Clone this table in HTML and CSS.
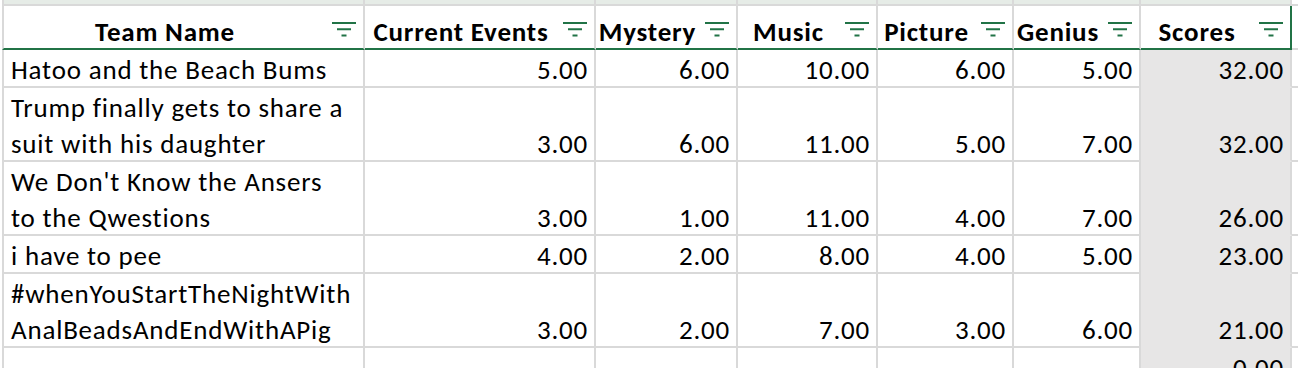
FILE: index.html
```html
<!DOCTYPE html>
<html>
<head>
<meta charset="utf-8">
<link rel="stylesheet" href="styles.css">
</head>
<body>
<div class="sheet">
  <div class="row strip">
    <div class="cell first"></div><div class="cell"></div><div class="cell"></div><div class="cell"></div><div class="cell"></div><div class="cell"></div><div class="cell"></div><div class="cell pad"></div>
  </div>
  <div class="row head">
    <div class="cell hcell first"><span class="ht">Team Name</span><span class="fb"><svg width="24" height="16" viewBox="0 0 24 16"><path d="M0 1H24M5 7.2H19M9.5 13.4H14.5" stroke="#217346" stroke-width="2" fill="none"/></svg></span></div>
    <div class="cell hcell"><span class="ht">Current Events</span><span class="fb"><svg width="24" height="16" viewBox="0 0 24 16"><path d="M0 1H24M5 7.2H19M9.5 13.4H14.5" stroke="#217346" stroke-width="2" fill="none"/></svg></span></div>
    <div class="cell hcell"><span class="ht">Mystery</span><span class="fb"><svg width="24" height="16" viewBox="0 0 24 16"><path d="M0 1H24M5 7.2H19M9.5 13.4H14.5" stroke="#217346" stroke-width="2" fill="none"/></svg></span></div>
    <div class="cell hcell"><span class="ht">Music</span><span class="fb"><svg width="24" height="16" viewBox="0 0 24 16"><path d="M0 1H24M5 7.2H19M9.5 13.4H14.5" stroke="#217346" stroke-width="2" fill="none"/></svg></span></div>
    <div class="cell hcell"><span class="ht">Picture</span><span class="fb"><svg width="24" height="16" viewBox="0 0 24 16"><path d="M0 1H24M5 7.2H19M9.5 13.4H14.5" stroke="#217346" stroke-width="2" fill="none"/></svg></span></div>
    <div class="cell hcell"><span class="ht">Genius</span><span class="fb"><svg width="24" height="16" viewBox="0 0 24 16"><path d="M0 1H24M5 7.2H19M9.5 13.4H14.5" stroke="#217346" stroke-width="2" fill="none"/></svg></span></div>
    <div class="cell hcell last"><span class="ht">Scores</span><span class="fb"><svg width="24" height="16" viewBox="0 0 24 16"><path d="M0 1H24M5 7.2H19M9.5 13.4H14.5" stroke="#217346" stroke-width="2" fill="none"/></svg></span></div>
    <div class="cell pad"></div>
  </div>
  <div class="row">
    <div class="cell first name"><span class="t">Hatoo and the Beach Bums</span></div>
    <div class="cell num"><span class="t">5.00</span></div><div class="cell num"><span class="t">6.00</span></div><div class="cell num"><span class="t">10.00</span></div><div class="cell num"><span class="t">6.00</span></div><div class="cell num"><span class="t">5.00</span></div><div class="cell num score"><span class="t">32.00</span></div><div class="cell pad"></div>
  </div>
  <div class="row">
    <div class="cell first name"><span class="t">Trump finally gets to share a<br>suit with his daughter</span></div>
    <div class="cell num"><span class="t">3.00</span></div><div class="cell num"><span class="t">6.00</span></div><div class="cell num"><span class="t">11.00</span></div><div class="cell num"><span class="t">5.00</span></div><div class="cell num"><span class="t">7.00</span></div><div class="cell num score"><span class="t">32.00</span></div><div class="cell pad"></div>
  </div>
  <div class="row">
    <div class="cell first name"><span class="t">We Don't Know the Ansers<br>to the Qwestions</span></div>
    <div class="cell num"><span class="t">3.00</span></div><div class="cell num"><span class="t">1.00</span></div><div class="cell num"><span class="t">11.00</span></div><div class="cell num"><span class="t">4.00</span></div><div class="cell num"><span class="t">7.00</span></div><div class="cell num score"><span class="t">26.00</span></div><div class="cell pad"></div>
  </div>
  <div class="row">
    <div class="cell first name"><span class="t">i have to pee</span></div>
    <div class="cell num"><span class="t">4.00</span></div><div class="cell num"><span class="t">2.00</span></div><div class="cell num"><span class="t">8.00</span></div><div class="cell num"><span class="t">4.00</span></div><div class="cell num"><span class="t">5.00</span></div><div class="cell num score"><span class="t">23.00</span></div><div class="cell pad"></div>
  </div>
  <div class="row">
    <div class="cell first name"><span class="t">#whenYouStartTheNightWith<br>AnalBeadsAndEndWithAPig</span></div>
    <div class="cell num"><span class="t">3.00</span></div><div class="cell num"><span class="t">2.00</span></div><div class="cell num"><span class="t">7.00</span></div><div class="cell num"><span class="t">3.00</span></div><div class="cell num"><span class="t">6.00</span></div><div class="cell num score"><span class="t">21.00</span></div><div class="cell pad"></div>
  </div>
  <div class="row">
    <div class="cell first name"><span class="t">&nbsp;</span></div>
    <div class="cell num"></div><div class="cell num"></div><div class="cell num"></div><div class="cell num"></div><div class="cell num"></div><div class="cell num score"><span class="t">0.00</span></div><div class="cell pad"></div>
  </div>
</div>
</body>
</html>
```

FILE: styles.css
```css
html, body {
  margin: 0;
  padding: 0;
  background: #ffffff;
  overflow: hidden;
}

body {
  font-family: "Carlito", "Calibri", "Lato", sans-serif;
  font-size: 27px;
  letter-spacing: 0.8px;
  color: #000000;
}

.sheet {
  margin-left: 2px;
  width: 1296px;
}

.row {
  display: grid;
  grid-template-columns: 363px 231px 142px 140px 136px 127px 151px 6px;
}

.cell {
  box-sizing: border-box;
  border-right: 2px solid #d9d9d9;
  border-bottom: 2px solid #d9d9d9;
  line-height: 36px;
  white-space: nowrap;
  display: flex;
  align-items: flex-end;
  padding-top: 2px;
}

.t {
  display: block;
  margin-bottom: -2px;
}

.cell.first {
  border-left: 2px solid #d9d9d9;
}

.cell.pad {
  border-right: none;
}

.strip .cell {
  height: 6px;
  padding-top: 0;
  background: #e6ece7;
}

.strip .cell.pad {
  background: #ffffff;
}

.head .cell {
  height: 44px;
}

.head .hcell {
  border-bottom-color: #217346;
  font-weight: bold;
  padding: 0;
}

.head .hcell.last {
  border-right-color: #217346;
}

.ht {
  flex: 1;
  text-align: center;
  min-width: 0;
  margin-bottom: -2px;
}

.fb {
  flex: none;
  width: 37px;
  box-sizing: border-box;
  padding-left: 6px;
  align-self: flex-start;
}

.fb svg {
  display: block;
  margin-top: 16px;
}

.name {
  padding-left: 7px;
  padding-right: 6px;
}

.num {
  justify-content: flex-end;
  padding-left: 4px;
  padding-right: 6px;
}

.num.score {
  background: #e7e6e6;
  border-bottom-color: #e7e6e6;
}
```
